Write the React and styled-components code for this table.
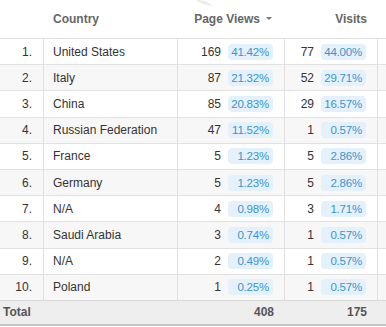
import styled, { createGlobalStyle } from 'styled-components';

const GlobalStyle = createGlobalStyle`
  html, body {
    margin: 0;
    padding: 0;
    background: #fff;
  }
  body {
    font-family: 'Liberation Sans', Arial, sans-serif;
    font-size: 12px;
    color: #333;
  }
`

const StyledTable = styled.div`
  width: 386px;
  height: 327px;
  overflow: hidden;
`
const StyledHead = styled.div`
  position: relative;
  display: flex;
  height: 38px;
  align-items: center;
  font-weight: 700;
  color: #666;
`
const StyledRow = styled.div`
  display: flex;
  height: 26.2px;
  box-sizing: border-box;
  border-top: 1px solid #e1e1e1;
  background: ${props => props.striped ? '#f7f7f7' : '#fff'};
`
const StyledTotal = styled.div`
  display: flex;
  height: 26px;
  box-sizing: border-box;
  border-top: 1px solid #d6d6d6;
  border-bottom: 2px solid #c4c4c4;
  background: #eeeeee;
  font-weight: 700;
  color: #555;
`
const StyledCell = styled.div`
  display: flex;
  align-items: center;
  justify-content: ${props => props.align || 'flex-start'};
  box-sizing: border-box;
  width: ${props => props.width}px;
  flex: ${props => props.grow ? '1 1 auto' : '0 0 auto'};
  padding: ${props => props.pad || '0'};
  border-left: ${props => props.line ? '1px solid #e1e1e1' : '0'};
  white-space: nowrap;
`
const StyledNum = styled.span`
  margin-right: 7px;
`
const StyledBadge = styled.span`
  display: inline-block;
  width: 45px;
  height: 16px;
  line-height: 16px;
  box-sizing: border-box;
  padding: 0 4px 0 0;
  text-align: right;
  font-size: 11.5px;
  letter-spacing: -0.2px;
  border-radius: 4px;
  background: #e4f1fa;
  color: #3995cf;
`
const StyledCaret = styled.span`
  display: inline-block;
  width: 0;
  height: 0;
  margin: 0 0 1px 6px;
  border-left: 3px solid transparent;
  border-right: 3px solid transparent;
  border-top: 3px solid #777;
`
const StyledGhost = styled.svg`
  position: absolute;
  left: 194px;
  top: -2px;
`

const rows = [
  ['United States', 169, '41.42%', 77, '44.00%'],
  ['Italy', 87, '21.32%', 52, '29.71%'],
  ['China', 85, '20.83%', 29, '16.57%'],
  ['Russian Federation', 47, '11.52%', 1, '0.57%'],
  ['France', 5, '1.23%', 5, '2.86%'],
  ['Germany', 5, '1.23%', 5, '2.86%'],
  ['N/A', 4, '0.98%', 3, '1.71%'],
  ['Saudi Arabia', 3, '0.74%', 1, '0.57%'],
  ['N/A', 2, '0.49%', 1, '0.57%'],
  ['Poland', 1, '0.25%', 1, '0.57%'],
]

const App = () => {
  return (
    <StyledTable>
      <GlobalStyle />
      <StyledHead>
        <StyledGhost width="22" height="9" viewBox="0 0 22 9">
          <path d="M1 1 C6 3 12 2 16 6 L20 8 L13 7 C8 6 4 4 1 1 Z" fill="#ececec" />
        </StyledGhost>
        <StyledCell width={43} />
        <StyledCell width={134} pad="0 0 0 10px">Country</StyledCell>
        <StyledCell width={107} align="flex-end" pad="0 12px 0 0">
          Page Views<StyledCaret />
        </StyledCell>
        <StyledCell width={93} align="flex-end" pad="0 10px 0 0">Visits</StyledCell>
        <StyledCell grow />
      </StyledHead>
      {rows.map((r, i) => (
        <StyledRow key={i} striped={i % 2 === 1}>
          <StyledCell width={43} align="flex-end" pad="0 11px 0 0">{i + 1}.</StyledCell>
          <StyledCell width={134} pad="0 0 0 9px" line>{r[0]}</StyledCell>
          <StyledCell width={107} align="flex-end" pad="0 11px 0 0" line>
            <StyledNum>{r[1]}</StyledNum>
            <StyledBadge>{r[2]}</StyledBadge>
          </StyledCell>
          <StyledCell width={93} align="flex-end" pad="0 11px 0 0" line>
            <StyledNum>{r[3]}</StyledNum>
            <StyledBadge>{r[4]}</StyledBadge>
          </StyledCell>
          <StyledCell grow line />
        </StyledRow>
      ))}
      <StyledTotal>
        <StyledCell width={177} pad="0 0 0 3px">Total</StyledCell>
        <StyledCell width={107} align="flex-end" pad="0 10px 0 0">408</StyledCell>
        <StyledCell width={93} align="flex-end" pad="0 10px 0 0">175</StyledCell>
        <StyledCell grow />
      </StyledTotal>
    </StyledTable>
  );
};

export default App;
